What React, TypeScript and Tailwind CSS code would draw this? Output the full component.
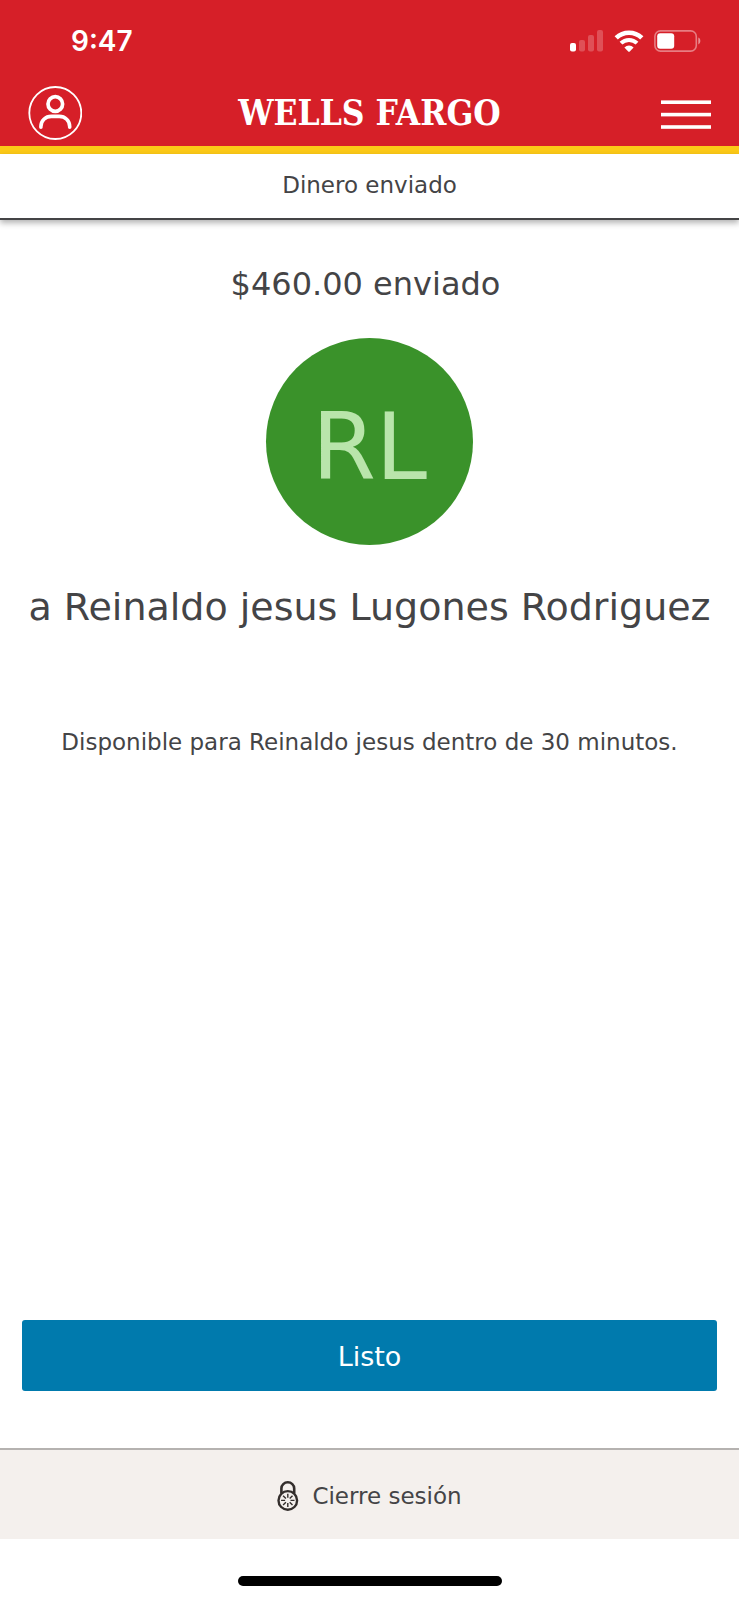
function SignalIcon() {
  return (
    <svg width="34" height="22" viewBox="0 0 34 22" fill="#fff" aria-hidden="true">
      <rect x="0" y="13" width="6" height="8.4" rx="2" />
      <rect x="9" y="10" width="6" height="11.4" rx="2" opacity="0.22" />
      <rect x="18" y="5" width="6" height="16.4" rx="2" opacity="0.22" />
      <rect x="27" y="0" width="6" height="21.4" rx="2" opacity="0.22" />
    </svg>
  );
}

function WifiIcon() {
  return (
    <svg width="30" height="22" viewBox="0 0 30 22" fill="none" stroke="#fff" aria-hidden="true">
      <path d="M2.2 7.9a18.3 18.3 0 0 1 25.6 0" strokeWidth="4.6" />
      <path d="M7 13.2a11.4 11.4 0 0 1 16 0" strokeWidth="4" />
      <path d="M10.4 17.4a6.4 6.4 0 0 1 9.2 0L15.8 21.4q-.8.8-1.6 0z" fill="#fff" stroke="none" />
    </svg>
  );
}

function BatteryIcon() {
  return (
    <svg width="48" height="22" viewBox="0 0 48 22" aria-hidden="true">
      <rect x="0.9" y="0.9" width="41.4" height="20.2" rx="5.6" fill="none" stroke="#fff" strokeOpacity="0.42" strokeWidth="1.6" />
      <path d="M44.3 7.6c2.7 1 2.7 5.8 0 6.8z" fill="#fff" fillOpacity="0.5" />
      <rect x="3.2" y="3.2" width="17" height="15.6" rx="3" fill="#fff" />
    </svg>
  );
}

function ProfileIcon() {
  return (
    <svg width="54" height="54" viewBox="0 0 54 54" fill="none" stroke="#fff" aria-hidden="true">
      <circle cx="27.3" cy="27" r="26" strokeWidth="1.8" />
      <circle cx="27.3" cy="18" r="7.3" strokeWidth="3.7" />
      <path d="M12.9 41.2v-.6c0-6 4.6-10.2 10.4-10.2h8c5.8 0 10.4 4.2 10.4 10.2v.6" strokeWidth="3.6" strokeLinecap="round" />
    </svg>
  );
}

function MenuIcon() {
  return (
    <svg width="50" height="30" viewBox="0 0 50 30" fill="#fff" aria-hidden="true">
      <rect y="0.4" width="50" height="3.6" />
      <rect y="12.8" width="50" height="3.6" />
      <rect y="25.2" width="50" height="3.6" />
    </svg>
  );
}

function LockIcon() {
  return (
    <svg width="22" height="30" viewBox="0 0 22 30" fill="none" stroke="#332e2c" aria-hidden="true">
      <path d="M4.4 12V7.4a6.4 6.1 0 0 1 12.8 0V12" strokeWidth="2.6" />
      <circle cx="10.8" cy="19.4" r="9.3" strokeWidth="2.4" />
      <path
        d="M10.8 12.7v4M10.8 22.1v4M4.1 19.4h4M13.5 19.4h4M6.1 14.7l2.8 2.8M12.7 21.3l2.8 2.8M15.5 14.7l-2.8 2.8M8.9 21.3L6.1 24.1"
        strokeWidth="1.4"
      />
    </svg>
  );
}

export default function App() {
  return (
    <div className="flex min-h-screen flex-col bg-white font-['DejaVu_Sans',Verdana,sans-serif] text-[#444446]">
      <header className="border-b-8 border-[#fcc917] bg-[#d61f28] text-white">
        <div className="flex h-20 items-center justify-between pt-[2px] pr-[37px] pl-[71px]">
          <span className="font-['Inter',sans-serif] text-[28px] leading-8 font-semibold">9:47</span>
          <div className="flex items-center gap-[10px]">
            <SignalIcon />
            <WifiIcon />
            <BatteryIcon />
          </div>
        </div>
        <div className="grid h-[66px] grid-cols-[1fr_auto_1fr] items-center px-7">
          <button type="button" aria-label="Perfil" className="justify-self-start">
            <ProfileIcon />
          </button>
          <span className="font-['DejaVu_Serif_Condensed','DejaVu_Serif',serif] text-[35px] leading-10 font-bold">
            WELLS FARGO
          </span>
          <button type="button" aria-label="Menú" className="justify-self-end pt-[3px]">
            <MenuIcon />
          </button>
        </div>
      </header>

      <h1 className="border-b-2 border-[#444446] pt-[15px] pb-[17px] text-center text-[23px] leading-8 shadow-[0_3px_6px_rgba(0,0,0,0.3)]">
        Dinero enviado
      </h1>

      <main className="flex flex-1 flex-col items-center px-[22px] pt-11 text-center">
        <p className="pr-2 text-[32px] leading-10">$460.00 enviado</p>
        <div className="mt-[34px] flex size-[207px] items-center justify-center rounded-full bg-[#3a922a] pt-3 text-[92px] leading-none text-[#b9e5ab]">
          RL
        </div>
        <p className="mt-[38px] text-[38px] leading-12">a Reinaldo jesus Lugones Rodriguez</p>
        <p className="mt-[95px] text-[23px] leading-8">Disponible para Reinaldo jesus dentro de 30 minutos.</p>
        <button
          type="button"
          className="mt-auto mb-[57px] h-[71px] w-full rounded-[3px] bg-[#007aad] pt-[2px] text-[27px] leading-8 text-white"
        >
          Listo
        </button>
      </main>

      <footer>
        <div className="flex h-[91px] items-center justify-center border-t-2 border-[#b5b2b0] bg-[#f4f0ed] pt-[3px]">
          <a href="#salir" className="flex items-center gap-[13px] text-[23px] leading-8">
            <LockIcon />
            Cierre sesión
          </a>
        </div>
        <div className="flex h-[61px] justify-center pt-[37px]">
          <div className="h-[10px] w-[264px] rounded-full bg-black" />
        </div>
      </footer>
    </div>
  );
}
